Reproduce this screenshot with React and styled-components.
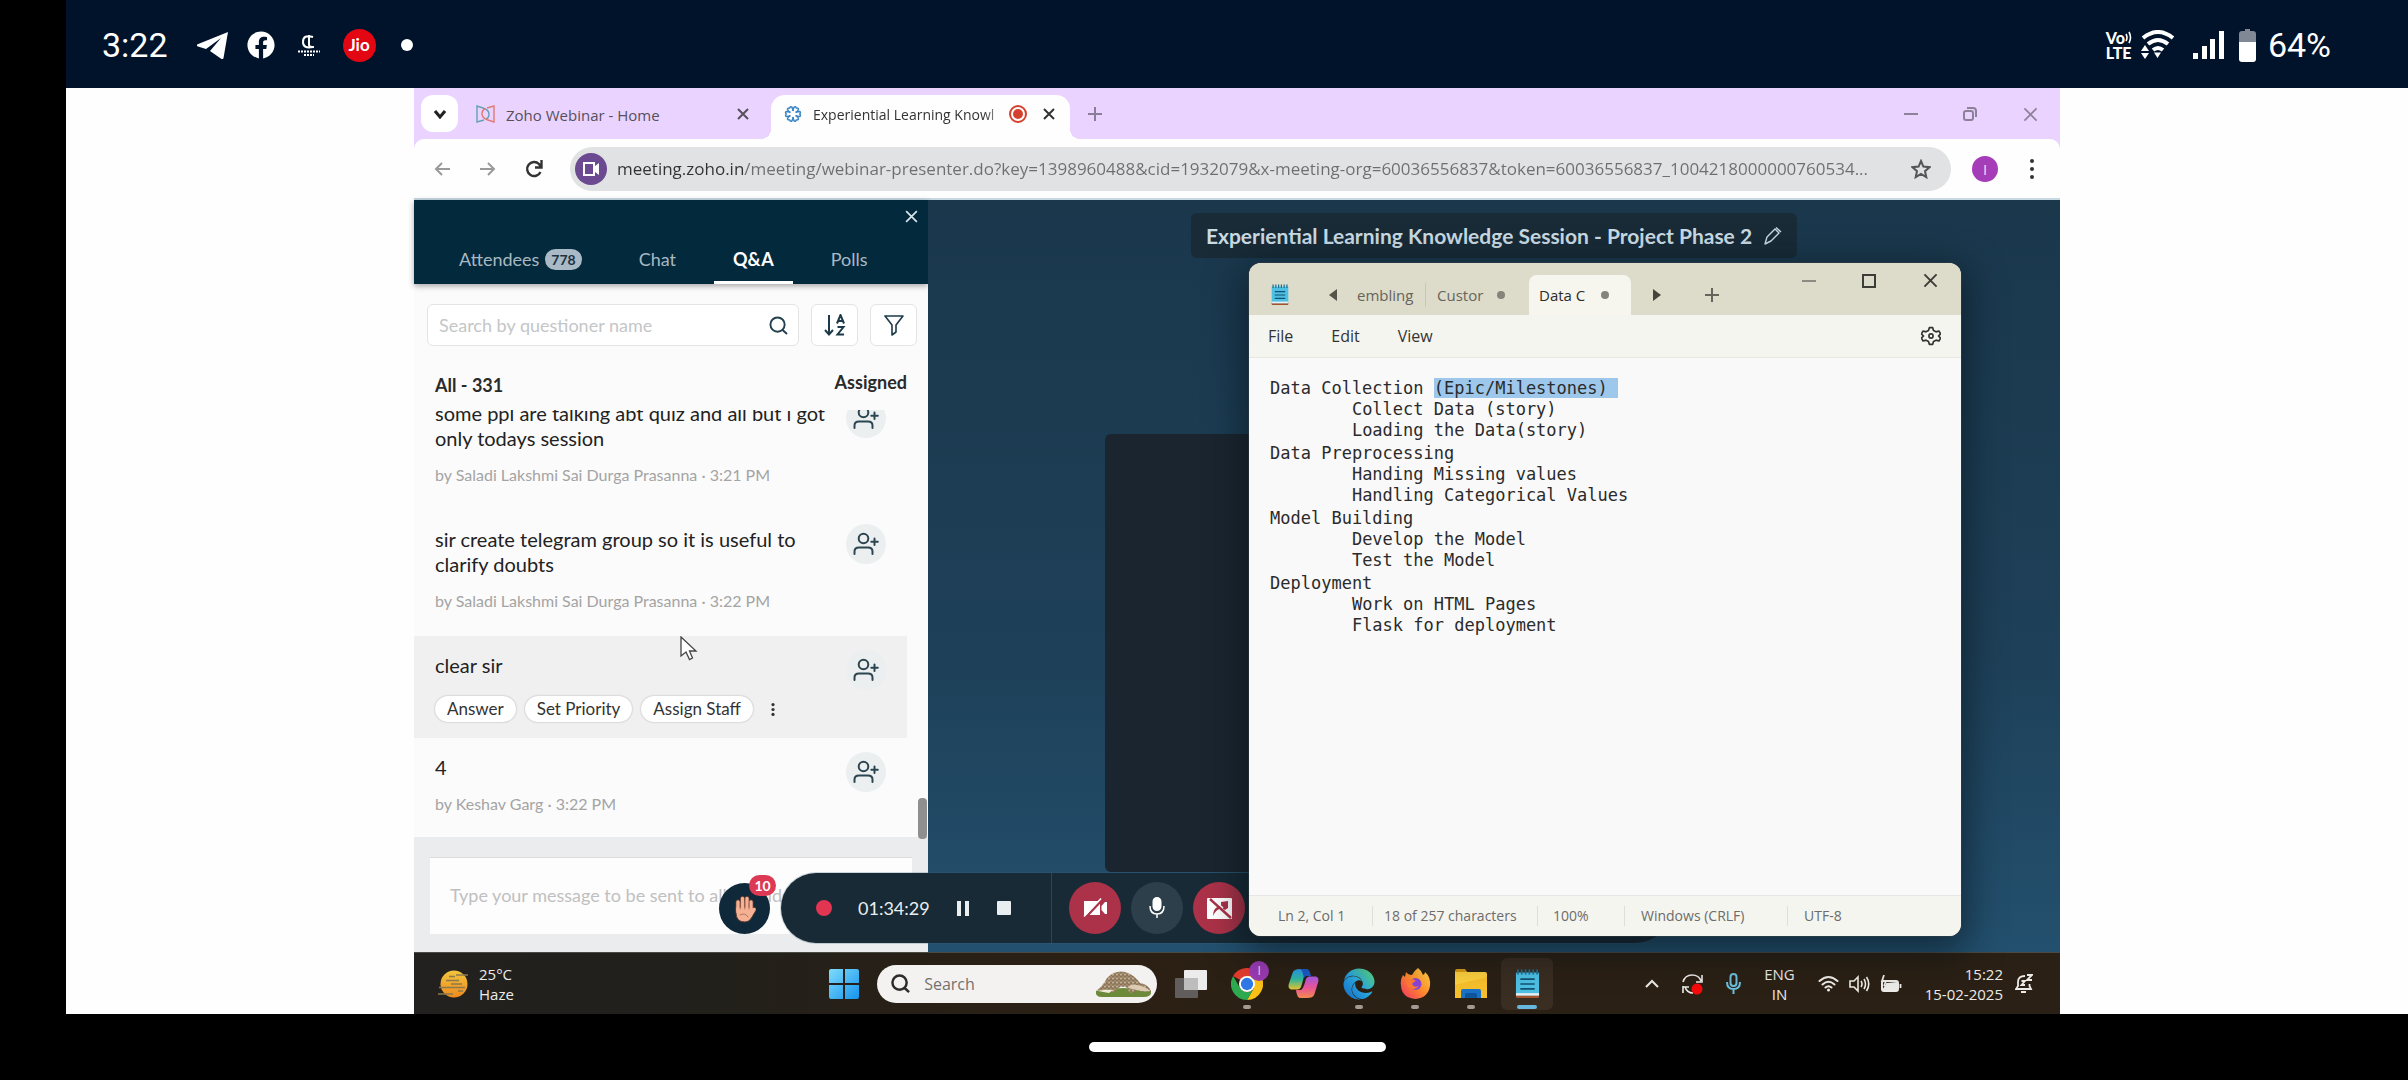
import React from "react";
import styled, { createGlobalStyle, css } from "styled-components";
import { FaFacebook, FaEdge } from "react-icons/fa";

const lato = `Lato, "Open Sans", sans-serif`;
const segoe = `"Open Sans", "Noto Sans", sans-serif`;

const Global = createGlobalStyle`
  * { box-sizing: border-box; }
  body { margin: 0; background: #000; font-family: ${lato}; }
  button, input, textarea { font: inherit; color: inherit; margin: 0; padding: 0; border: 0; background: none; outline: none; }
  ul { list-style: none; margin: 0; padding: 0; }
  h1, h2, p { margin: 0; font: inherit; }
  svg { display: block; flex: none; }
`;

/* ---------- phone shell ---------- */
const Phone = styled.div`
  height: 100vh;
  display: flex;
  flex-direction: column;
  padding-left: 66px;
  background: #000;
`;
const StatusBar = styled.header`
  height: 88px;
  flex: none;
  display: flex;
  align-items: center;
  justify-content: space-between;
  padding: 2px 77px 0 36px;
  background: #00132a;
  color: #fff;
  font: 400 34px/40px Roboto, sans-serif;
`;
const StatusGroup = styled.div`
  display: flex;
  align-items: center;
  gap: ${(p) => p.$gap}px;
`;
const Clock = styled.time`
  margin-right: 10px;
`;
const Jio = styled.span`
  width: 33px;
  height: 33px;
  border-radius: 50%;
  background: #e30613;
  display: grid;
  place-items: center;
  font: 700 17px/18px Lato, sans-serif;
`;
const MoreDot = styled.span`
  width: 12px;
  height: 12px;
  margin-left: 6px;
  border-radius: 50%;
  background: #fff;
`;
const VoLte = styled.span`
  display: flex;
  flex-direction: column;
  font: 900 16px/15px Lato, sans-serif;
`;
const VoRow = styled.span`
  display: flex;
  align-items: center;
`;
const Canvas = styled.main`
  flex: 1;
  min-height: 0;
  display: flex;
  padding: 0 348px;
  background: #fefefe;
`;
const HomeBar = styled.footer`
  height: 66px;
  flex: none;
  display: grid;
  place-items: center;
`;
const HomePill = styled.button`
  width: 297px;
  height: 10px;
  border-radius: 5px;
  background: #fff;
`;

/* ---------- shared screen ---------- */
const Share = styled.div`
  position: relative;
  flex: 1;
  min-width: 0;
  display: flex;
  flex-direction: column;
  background: #ead4ff;
`;
const TabStrip = styled.div`
  height: 51px;
  flex: none;
  display: flex;
  align-items: center;
  padding: 7px 21px 0 7px;
  color: #55505c;
  font: 400 15px/20px ${segoe};
`;
const TabMenu = styled.button`
  width: 37px;
  height: 37px;
  margin-bottom: 7px;
  border-radius: 12px;
  background: #fff;
  color: #222;
  display: grid;
  place-items: center;
`;
const ChromeTab = styled.div`
  position: relative;
  height: 44px;
  display: flex;
  align-items: center;
  padding-bottom: 6px;
  ${(p) =>
    p.$active
      ? css`
          width: 299px;
          padding-left: 13px;
          padding-right: 14px;
          background: #fffefe;
          border-radius: 14px 14px 0 0;
          color: #333;
          font-size: 14px;
          &::before, &::after {
            content: "";
            position: absolute;
            bottom: 0;
            width: 10px;
            height: 10px;
          }
          &::before { left: -10px; background: radial-gradient(circle at 0 0, transparent 10px, #fffefe 10px); }
          &::after { right: -10px; background: radial-gradient(circle at 100% 0, transparent 10px, #fffefe 10px); }
        `
      : css`
          width: 313px;
          padding-left: 18px;
          padding-right: 21px;
        `}
`;
const TabTitle = styled.button`
  flex: 1;
  min-width: 0;
  margin: 2px 2px 0 11px;
  white-space: nowrap;
  text-align: left;
  ${(p) => p.$fade && css`mask-image: linear-gradient(90deg, #000 88%, transparent 102%);`}
`;
const Plain = styled.button`
  display: grid;
  place-items: center;
  color: ${(p) => p.$color || "inherit"};
`;
const RecIcon = styled.span`
  margin-right: 15px;
`;
const NewTab = styled(Plain)`
  margin: 0 auto 6px 18px;
  color: #8b7d99;
`;
const WinControls = styled.div`
  display: flex;
  gap: 45px;
  margin-bottom: 6px;
  color: #8d8199;
`;
const Toolbar = styled.div`
  height: 61px;
  flex: none;
  display: flex;
  align-items: center;
  gap: 26px;
  padding: 0 25px 0 18px;
  background: #fffefe;
  border-bottom: 2px solid #c6d8e2;
  border-radius: 10px 10px 0 0;
`;
const Omnibox = styled.label`
  flex: 1;
  height: 44px;
  display: flex;
  align-items: center;
  gap: 10px;
  padding: 0 20px 0 5px;
  border-radius: 22px;
  background: #e1e2e3;
`;
const SiteBadge = styled.span`
  width: 32px;
  height: 32px;
  border-radius: 50%;
  background: #6b4a91;
  display: grid;
  place-items: center;
`;
const UrlInput = styled.input`
  flex: 1;
  min-width: 0;
  height: 30px;
  font: 400 17px/30px ${segoe};
  color: transparent;
  background: linear-gradient(90deg, #303234 127px, #6c6e70 127px);
  background-clip: text;
  -webkit-background-clip: text;
`;
const Avatar = styled.button`
  width: 26px;
  height: 26px;
  margin: 0 5px 0 -5px;
  border-radius: 50%;
  background: #a63db8;
  color: #f3dcf7;
  font: 400 15px/26px ${segoe};
`;

/* ---------- webinar ---------- */
const Webinar = styled.div`
  flex: 1;
  min-height: 0;
  display: flex;
`;
const Panel = styled.section`
  width: 514px;
  flex: none;
  display: flex;
  flex-direction: column;
  background: #fbfbfb;
  font-family: ${lato};
`;
const PanelHead = styled.div`
  height: 84px;
  flex: none;
  display: flex;
  flex-direction: column;
  justify-content: space-between;
  background: #03293d;
  box-shadow: 0 2px 6px rgba(0, 0, 0, 0.35);
`;
const PanelClose = styled.button`
  align-self: flex-end;
  margin: 9px 9px 0 0;
  color: #dbe4e9;
`;
const PanelTabs = styled.nav`
  display: flex;
  gap: 19px;
  padding-left: 26px;
`;
const PanelTab = styled.button`
  height: 50px;
  padding: 3px 19px 0;
  display: flex;
  align-items: center;
  gap: 6px;
  border-bottom: 3px solid ${(p) => (p.$active ? "#fff" : "transparent")};
  color: ${(p) => (p.$active ? "#fff" : "#a9b9c2")};
  font-size: 18px;
  font-weight: ${(p) => (p.$active ? 700 : 400)};
`;
const Count = styled.span`
  height: 21px;
  padding: 0 6px;
  border-radius: 11px;
  background: #a9bac6;
  color: #1d3341;
  font: 700 14px/21px ${lato};
`;
const Filters = styled.div`
  display: flex;
  gap: 12px;
  padding: 20px 11px 0 13px;
`;
const box = css`
  height: 42px;
  border: 1px solid #e4e4e4;
  border-radius: 6px;
  background: #fff;
`;
const SearchBox = styled.label`
  ${box}
  flex: 1;
  display: flex;
  align-items: center;
  padding: 0 10px 0 11px;
  color: #23404f;
`;
const SearchInput = styled.input`
  flex: 1;
  min-width: 0;
  font-size: 18px;
  &::placeholder { color: #c4c6c7; opacity: 1; }
`;
const FilterButton = styled.button`
  ${box}
  width: 47px;
  display: grid;
  place-items: center;
  color: #1c3a49;
`;
const ListHead = styled.div`
  display: flex;
  justify-content: space-between;
  align-items: center;
  height: 64px;
  flex: none;
  padding: 14px 21px 0;
  font: 700 18px/24px ${lato};
  color: #2a2a2a;
`;
const Assigned = styled.span`
  margin-bottom: 6px;
`;
const List = styled.ul`
  flex: 1;
  min-height: 0;
  overflow: hidden;
  display: flex;
  flex-direction: column;
  justify-content: flex-end;
`;
const Item = styled.li`
  flex: none;
  display: flex;
  justify-content: space-between;
  align-items: flex-start;
  margin-right: 21px;
  padding: 14px 21px ${(p) => p.$bottom}px 21px;
  background: ${(p) => (p.$active ? "#f0f0f0" : "transparent")};
`;
const ItemBody = styled.div`
  padding-top: 3px;
  flex: 1;
  margin-right: 4px;
`;
const Question = styled.p`
  font-size: 20px;
  line-height: 25px;
  color: #222;
`;
const Byline = styled.p`
  margin-top: 14px;
  font-size: 16px;
  line-height: 20px;
  color: #a4a4a4;
`;
const AssignButton = styled.button`
  width: 40px;
  height: 40px;
  border-radius: 50%;
  background: #ebeff0;
  color: #2c4550;
  display: grid;
  place-items: center;
`;
const Actions = styled.div`
  display: flex;
  align-items: center;
  gap: 9px;
  margin-top: 18px;
`;
const Pill = styled.button`
  height: 26px;
  padding: 0 12px;
  border-radius: 13px;
  background: #fff;
  box-shadow: 0 0 2px rgba(0, 0, 0, 0.3);
  font-size: 17px;
  line-height: 26px;
  color: #333;
  white-space: nowrap;
`;
const MoreButton = styled.button`
  margin-left: 8px;
  color: #333;
`;
const Composer = styled.div`
  height: 115px;
  flex: none;
  padding: 20px 16px 18px;
  background: #ebeced;
`;
const Message = styled.textarea`
  display: block;
  width: 100%;
  height: 77px;
  padding: 24px 20px;
  border-top: 1px solid #dcdcdc;
  background: #fdfdfd;
  resize: none;
  overflow: hidden;
  white-space: nowrap;
  font-size: 18px;
  line-height: 26px;
  &::placeholder { color: #c0c0c0; opacity: 1; }
`;
const ScrollThumb = styled.span`
  position: absolute;
  left: 504px;
  top: 710px;
  width: 9px;
  height: 41px;
  border-radius: 4px;
  background: #8f8f8f;
`;
const Stage = styled.section`
  flex: 1;
  min-width: 0;
  display: flex;
  flex-direction: column;
  align-items: center;
  padding-top: 13px;
  background: linear-gradient(180deg, #1a374c 0%, #1e4058 60%, #23506e 100%);
`;
const SessionTitle = styled.div`
  height: 45px;
  flex: none;
  display: flex;
  align-items: center;
  gap: 12px;
  padding: 0 15px;
  border-radius: 6px;
  background: #182b37;
  color: #c9dae3;
  font: 700 21px/28px ${lato};
  white-space: nowrap;
`;
const Video = styled.div`
  width: 778px;
  max-width: 90%;
  height: 438px;
  flex: none;
  margin-top: 176px;
  border-radius: 6px;
  background: #1b252f;
`;
const Controls = styled.div`
  position: absolute;
  left: 367px;
  top: 785px;
  width: 890px;
  height: 70px;
  display: flex;
  align-items: center;
  padding-left: 35px;
  border-radius: 35px;
  background: #172a35;
  box-shadow: 0 0 0 1px rgba(60, 100, 120, 0.25);
  color: #e9eef0;
`;
const RecDot = styled.span`
  width: 16px;
  height: 16px;
  border-radius: 50%;
  background: #e23552;
`;
const Timer = styled.time`
  width: 72px;
  margin: 0 26px;
  font: 400 18px/24px ${lato};
`;
const PlainGap = styled(Plain)`
  margin-right: 27px;
`;
const Divider = styled.span`
  align-self: stretch;
  width: 1px;
  margin: 0 17px 0 13px;
  background: #2e444f;
`;
const Round = styled.button`
  width: 52px;
  height: 52px;
  margin-right: 10px;
  border-radius: 50%;
  background: ${(p) => (p.$off ? "#ab3248" : "#2d3f4b")};
  color: #fff;
  display: grid;
  place-items: center;
`;
const HandButton = styled.button`
  position: absolute;
  left: 305px;
  top: 795px;
  width: 51px;
  height: 51px;
  border-radius: 50%;
  background: #10293a;
  display: grid;
  place-items: center;
`;
const HandCount = styled.span`
  position: absolute;
  left: 30px;
  top: -8px;
  width: 27px;
  height: 21px;
  border-radius: 11px;
  background: #dc3a54;
  color: #fff;
  font: 700 14px/21px ${lato};
`;
const Cursor = styled.svg`
  position: absolute;
  left: 266px;
  top: 548px;
`;

/* ---------- notepad ---------- */
const Notepad = styled.section`
  position: absolute;
  left: 835px;
  top: 175px;
  width: 712px;
  height: 673px;
  display: flex;
  flex-direction: column;
  border-radius: 12px;
  overflow: hidden;
  background: #f9f9f9;
  box-shadow: 0 0 0 1px rgba(60, 70, 70, 0.4), 0 10px 36px 6px rgba(5, 15, 22, 0.55);
  font-family: ${segoe};
`;
const NoteTabs = styled.div`
  height: 52px;
  flex: none;
  display: flex;
  align-items: flex-end;
  padding: 0 22px 0 22px;
  background: #dddbca;
  color: #66655b;
  font-size: 15px;
`;
const NoteCell = styled.div`
  height: 40px;
  width: ${(p) => p.$w}px;
  display: flex;
  align-items: center;
  justify-content: ${(p) => p.$justify || "center"};
`;
const NoteTab = styled.button`
  height: ${(p) => (p.$active ? 40 : 24)}px;
  margin-bottom: ${(p) => (p.$active ? 0 : 8)}px;
  width: ${(p) => p.$w}px;
  display: flex;
  align-items: center;
  justify-content: space-between;
  padding: 0 ${(p) => (p.$active ? 22 : 24)}px 0 ${(p) => (p.$active ? 10 : 11)}px;
  border-radius: ${(p) => (p.$active ? "8px 8px 0 0" : 0)};
  border-left: ${(p) => (p.$rule ? "1px solid #c9c7b6" : 0)};
  background: ${(p) => (p.$active ? "#f6f6ef" : "transparent")};
  color: ${(p) => (p.$active ? "#2c2c28" : "inherit")};
  line-height: 22px;
  white-space: nowrap;
`;
const Unsaved = styled.span`
  width: 8px;
  height: 8px;
  flex: none;
  border-radius: 50%;
  background: #85847b;
`;
const NoteControls = styled.div`
  display: flex;
  gap: 46px;
  margin: 0 0 26px auto;
  color: #3d3d38;
`;
const NoteMenu = styled.nav`
  height: 43px;
  flex: none;
  display: flex;
  align-items: center;
  padding: 0 20px 0 19px;
  border-bottom: 1px solid #e8e8e3;
  background: #f5f5ef;
  color: #333;
  font-size: 16px;
  line-height: 22px;
`;
const MenuItem = styled.button`
  margin-right: 38px;
`;
const Settings = styled(Plain)`
  margin-left: auto;
`;
const Editor = styled.div`
  flex: 1;
  display: flex;
  flex-direction: column;
  gap: 2px;
  padding: 20px 21px;
  color: #2b2b2b;
  font: 400 17px/21px "DejaVu Sans Mono", "Liberation Mono", monospace;
`;
const Block = styled.pre`
  margin: 0;
  font: inherit;
  tab-size: 8;
`;
const Selected = styled.mark`
  background: #9dc8eb;
  color: inherit;
`;
const NoteStatus = styled.div`
  height: 41px;
  flex: none;
  display: flex;
  align-items: center;
  border-top: 1px solid #e6e6e2;
  background: #f5f5f0;
  color: #6c6c6a;
  font-size: 14px;
  line-height: 20px;
`;
const StatusCell = styled.span`
  width: ${(p) => p.$w}px;
  padding-left: ${(p) => p.$pad}px;
  border-right: ${(p) => (p.$last ? 0 : "1px solid #dededa")};
`;

/* ---------- taskbar ---------- */
const Taskbar = styled.div`
  height: 62px;
  flex: none;
  display: flex;
  align-items: center;
  padding: 0 27px 0 24px;
  border-top: 1px solid #4a4a45;
  background: linear-gradient(90deg, #22211f 0%, #22201b 18%, #2c2014 40%, #2a2015 100%);
  color: #ecebe8;
  font: 400 15px/20px ${segoe};
`;
const Weather = styled.button`
  display: flex;
  align-items: center;
  gap: 10px;
  text-align: left;
`;
const Stack = styled.span`
  display: flex;
  flex-direction: column;
  text-align: ${(p) => p.$align || "left"};
`;
const Apps = styled.div`
  margin-left: auto;
  display: flex;
  align-items: center;
`;
const TaskSearch = styled.label`
  width: 280px;
  height: 38px;
  margin: 0 8px 0 18px;
  display: flex;
  align-items: center;
  gap: 14px;
  padding: 0 5px 0 14px;
  border-radius: 19px;
  background: #f3f2f0;
  color: #2c2c2c;
`;
const TaskInput = styled.input`
  flex: 1;
  min-width: 0;
  font-size: 16px;
  &::placeholder { color: #73716e; opacity: 1; }
`;
const Slots = styled.div`
  display: flex;
  gap: 4px;
`;
const AppSlot = styled.button`
  position: relative;
  width: 52px;
  height: 52px;
  border-radius: 6px;
  display: grid;
  place-items: center;
  background: ${(p) => (p.$current ? "#3a2d21" : "transparent")};
`;
const Running = styled.span`
  position: absolute;
  left: 50%;
  bottom: 1px;
  width: ${(p) => (p.$current ? 20 : 8)}px;
  height: 4px;
  border-radius: 2px;
  transform: translateX(-50%);
  background: ${(p) => (p.$current ? "#67b7e0" : "#a39b93")};
`;
const Tray = styled.div`
  margin-left: 92px;
  display: flex;
  align-items: center;
  gap: 23px;
`;
const TrayGroup = styled.div`
  display: flex;
  align-items: center;
  gap: ${(p) => p.$gap}px;
`;

/* ---------- icons ---------- */
const Svg = ({ w = 20, h, box, sw = 2, children, ...rest }) => (
  <svg width={w} height={h || w} viewBox={box || `0 0 ${w} ${h || w}`} fill="none" stroke="currentColor" strokeWidth={sw} aria-hidden="true" {...rest}>
    {children}
  </svg>
);
const Cross = ({ s = 14, sw = 2 }) => (
  <Svg w={s} box="0 0 14 14" sw={sw}><path d="M2 2L12 12M12 2L2 12" /></Svg>
);
const Minus = ({ sw = 2 }) => <Svg w={14} sw={sw}><path d="M0 7H14" /></Svg>;
const Dots = ({ h = 22, r = 2 }) => (
  <Svg w={6} h={h} stroke="none" fill="currentColor">
    <circle cx="3" cy={r + 1} r={r} /><circle cx="3" cy={h / 2} r={r} /><circle cx="3" cy={h - r - 1} r={r} />
  </Svg>
);
const Magnifier = ({ s = 20, sw = 2 }) => (
  <Svg w={s} box="0 0 20 20" sw={sw}><circle cx="9" cy="9" r="7.5" /><path d="M14 14.5L19 19" /></Svg>
);
const PersonPlus = () => (
  <Svg w={26} h={24} sw={2} strokeLinecap="round">
    <circle cx="10.500" cy="6.500" r="4.800" />
    <path d="M1.500 22V19.500C1.500 16.500 3.500 15.500 6 15.500H15C18 15.500 19.500 17 19.500 19.500V22" />
    <path d="M21.500 6.500V13M18.300 9.800H24.800" />
  </Svg>
);
const NotepadIcon = ({ w, h }) => (
  <Svg w={w} h={h} box="0 0 26 30" stroke="none">
    <rect x="1" y="26" width="24" height="3.500" rx="1" fill="#a3542d" />
    <rect x="1" y="3" width="24" height="24" rx="1" fill="#4ec0e4" />
    <rect x="1" y="24.500" width="24" height="2.500" fill="#e9eef0" />
    <path d="M3 0V5M7 0V5M11 0V5M15 0V5M19 0V5M23 0V5" stroke="#1c6f94" strokeWidth="1.800" />
    <path d="M5.500 10H20.500M5.500 15H20.500M5.500 20H20.500" stroke="#0f5272" strokeWidth="1.800" />
  </Svg>
);
const Chrome = () => (
  <Svg w={32} box="0 0 48 48" stroke="none">
    <path d="M24 24L3.200 12A24 24 0 0 1 44.800 12Z" fill="#e33b2e" />
    <path d="M24 12H44.800A24 24 0 0 1 24 48L34.400 30Z" fill="#fbc116" />
    <path d="M3.200 12L13.600 30A12 12 0 0 0 34.400 30L24 48A24 24 0 0 1 3.200 12Z" fill="#2da94f" />
    <circle cx="24" cy="24" r="12" fill="#fff" />
    <circle cx="24" cy="24" r="9.200" fill="#2f78e8" />
  </Svg>
);
const ChromeBadge = styled.span`
  position: absolute;
  right: 4px;
  top: 3px;
  width: 20px;
  height: 20px;
  border-radius: 50%;
  background: #9a3bb3;
  color: #f0d9f5;
  font: 400 12px/20px ${segoe};
`;
const Copilot = () => (
  <Svg w={31} h={29} stroke="none">
    <defs>
      <linearGradient id="cpA" x1="0" y1="0" x2="0" y2="1"><stop offset="0" stopColor="#2b9be8" /><stop offset=".5" stopColor="#2fb9a0" /><stop offset="1" stopColor="#e8c52f" /></linearGradient>
      <linearGradient id="cpB" x1="0" y1="0" x2="0" y2="1"><stop offset="0" stopColor="#a95ae8" /><stop offset=".5" stopColor="#e8559a" /><stop offset="1" stopColor="#f58a4f" /></linearGradient>
    </defs>
    <path d="M12 0H18L14.500 13L13 18C12 20 11 20.500 8 20.500H4C1 20.500 0 18 .8 15L4.500 4C5.500 1 8 0 12 0Z" fill="url(#cpA)" />
    <path d="M11 0H18C21 0 21.500 2 22.500 5L23 7H19C17.500 7 17 7.500 16 9C15 5 14.500 0 11 0Z" fill="#1d58c4" />
    <path d="M19 29H13C10 29 9.500 27 8.500 24L8 21H12C14 21 15 19 16.500 15L18 10C19 8 20 7.500 23 7.500H27C30 7.500 31 10 30.200 13L26.500 25C25.500 28 23 29 19 29Z" fill="url(#cpB)" />
  </Svg>
);
const Folder = () => (
  <Svg w={32} h={29} stroke="none">
    <path d="M0 2Q0 0 2 0H10L13 4H0Z" fill="#d79a16" />
    <path d="M0 3H30Q32 3 32 5V29H0Z" fill="#fccf3e" />
    <path d="M0 16L32 8V29H0Z" fill="#f6bf2c" />
    <path d="M6 29V22Q6 20 8 20H24Q26 20 26 22V29Z" fill="#1a72c4" />
    <path d="M10 29V26Q10 24 12 24H20Q22 24 22 26V29Z" fill="#0d559c" />
  </Svg>
);
const Hand = () => (
  <Svg w={22} h={28} strokeLinecap="round">
    <g stroke="#5b3a32" strokeWidth="5">
      <path d="M4 7V16M8.500 3.500V14M13 3.500V14M17 7V16M20 14.500L16 21" />
    </g>
    <path d="M2 12H18.500V17L20 15Q18 27 11 27Q2 27 2 18Z" fill="#f5b193" stroke="#5b3a32" strokeWidth="1" />
    <g stroke="#f5b193" strokeWidth="3.400">
      <path d="M4 7V17M8.500 3.500V17M13 3.500V17M17 7V17M20 14.500L16 21" />
    </g>
    <path d="M6.200 8V14M10.700 7V14M15 8V14M6 20Q11 17 14 22" stroke="#a7634f" strokeWidth=".8" />
  </Svg>
);
const Pangolin = () => (
  <Svg w={57} h={27} stroke="none">
    <defs>
      <pattern id="scales" width="4" height="4" patternUnits="userSpaceOnUse">
        <rect width="4" height="4" fill="#a18a6b" /><path d="M0 0Q2 5 4 0" fill="#c4b091" stroke="#63503b" strokeWidth=".7" />
      </pattern>
    </defs>
    <path d="M1 21Q28 15 56 21Q57 27 48 27H7Q0 27 1 21Z" fill="#6d8a3a" />
    <path d="M1 21Q8 16 12 8Q20 0 30 2Q40 5 45 13Q53 14 56 21Q48 23 42 20L38 23H34L33 18Q24 14 20 22H15L14 19Q8 20 1 21Z" fill="url(#scales)" />
    <path d="M33 18Q35 13 42 15Q50 16 55 21Q48 22 42 20Z" fill="#dccbb2" />
    <path d="M3 21Q11 19 18 20L14 23Z" fill="#f1ead9" />
  </Svg>
);
const WindowsLogo = () => (
  <Svg w={30} stroke="none">
    <defs><linearGradient id="win" x1="0" y1="0" x2="1" y2="1"><stop offset="0" stopColor="#7fdcfb" /><stop offset="1" stopColor="#1593ee" /></linearGradient></defs>
    <path d="M0 2Q0 0 2 0H14V14H0ZM16 0H28Q30 0 30 2V14H16ZM0 16H14V30H2Q0 30 0 28ZM16 16H30V28Q30 30 28 30H16Z" fill="url(#win)" />
  </Svg>
);
const Haze = () => (
  <Svg w={31} h={28}>
    <defs><linearGradient id="sun" x1="0" y1="0" x2="0" y2="1"><stop offset="0" stopColor="#f0c53c" /><stop offset="1" stopColor="#f08a1e" /></linearGradient></defs>
    <circle cx="16" cy="14" r="13.500" fill="url(#sun)" stroke="none" />
    <path d="M11 6.500H17M18 5H30M8 10.500H21M13 14H24M1 17.500H27M20 21H25M0 24H15" stroke="#8a7a4e" strokeWidth="1.500" />
  </Svg>
);
const WifiTray = () => (
  <Svg w={21} h={17} sw={2} strokeLinecap="round">
    <path d="M1.500 6Q10.500 -2 19.500 6M4.500 9.500Q10.500 4 16.500 9.500M7.500 12.500Q10.500 10 13.500 12.500" /><circle cx="10.500" cy="15" r="1.500" fill="currentColor" stroke="none" />
  </Svg>
);

const entries = [
  { text: "some ppl are talking abt quiz and all but i got only todays session", by: "by Saladi Lakshmi Sai Durga Prasanna · 3:21 PM", bottom: 25 },
  { text: "sir create telegram group so it is useful to clarify doubts", by: "by Saladi Lakshmi Sai Durga Prasanna · 3:22 PM", bottom: 25 },
  { text: "clear sir", active: true, bottom: 16 },
  { text: "4", by: "by Keshav Garg · 3:22 PM", bottom: 23 },
];

const notes = [
  ["Data Preprocessing", "Handing Missing values", "Handling Categorical Values"],
  ["Model Building", "Develop the Model", "Test the Model"],
  ["Deployment", "Work on HTML Pages", "Flask for deployment"],
];

function PhoneStatus() {
  return (
    <StatusBar>
      <StatusGroup $gap={19}>
        <Clock>3:22</Clock>
        <Svg w={31} h={27} stroke="none" fill="currentColor"><path d="M31 0L0 12.500Q-.5 14 1 14.500L9 17L24 6L13 19L24.500 27Q26 27.500 26.500 26Z" /></Svg>
        <FaFacebook size={28} />
        <Svg w={30} h={24} sw={2}>
          <path d="M19 4Q9 1 9 9Q9 16 19 14M15 2V12Q15 14 20 14" />
          <path d="M4 18.500H26M10 22H20" strokeWidth="2" strokeDasharray="2 1" />
        </Svg>
        <Jio>Jio</Jio>
        <MoreDot />
      </StatusGroup>
      <StatusGroup $gap={15}>
        <StatusGroup $gap={9}>
          <VoLte>
            <VoRow>Vo<Svg w={7} h={13} sw={1.6}><path d="M1 3Q3 6.500 1 10M4 1Q7 6.500 4 12" /></Svg></VoRow>
            <span>LTE</span>
          </VoLte>
          <Svg w={34} h={30} sw={4}>
            <path d="M2 8Q17 -4 32 8M7 14Q17 6 27 14M12 20Q17 16 22 20" />
            <path d="M13 22.500H20L16.500 28Z M0 21H8L4 15ZM0 23H8L4 29Z" fill="currentColor" stroke="none" />
          </Svg>
        </StatusGroup>
        <Svg w={34} h={28} stroke="none" fill="currentColor"><path d="M3 22H8V28H3ZM12 15H17V28H12ZM20 8H25V28H20ZM29 0H34V28H29Z" /></Svg>
        <StatusGroup $gap={12}>
          <Svg w={17} h={33} stroke="none">
            <path d="M6 0H11V2H14Q17 2 17 5V14H0V5Q0 2 3 2H6Z" fill="#7f8894" />
            <path d="M0 13H17V30Q17 33 14 33H3Q0 33 0 30Z" fill="#fff" />
          </Svg>
          <span>64%</span>
        </StatusGroup>
      </StatusGroup>
    </StatusBar>
  );
}

function Browser() {
  return (
    <>
      <TabStrip>
        <TabMenu aria-label="Search tabs"><Svg w={12} h={10} sw={3}><path d="M1 2L6 8L11 2" /></Svg></TabMenu>
        <ChromeTab>
          <Svg w={19} h={18} sw={1.4}>
            <path d="M8 15L1 17V1L7 3Q13 5 13 9Q13 13 10 14" stroke="#64a0b8" /><path d="M11 3L18 1V17L12 15Q6 13 6 9Q6 5 9 4" stroke="#e07a72" />
          </Svg>
          <TabTitle>Zoho Webinar - Home</TabTitle>
          <Plain aria-label="Close tab"><Cross s={14} sw={2} /></Plain>
        </ChromeTab>
        <ChromeTab $active>
          <Svg w={18} sw={1.5} stroke="#3d86c6">
            {[0, 60, 120, 180, 240, 300].map((a) => <path key={a} d="M7 6.500L6.500 2.500Q7 .8 9 2.200Q11 .8 11.500 2.500L11 6.500" transform={`rotate(${a + 30} 9 9)`} />)}
          </Svg>
          <TabTitle $fade>Experiential Learning Knowl</TabTitle>
          <RecIcon><Svg w={18} sw={2} stroke="#d5402f"><circle cx="9" cy="9" r="8" /><circle cx="9" cy="9" r="4" fill="#d5402f" /></Svg></RecIcon>
          <Plain aria-label="Close tab"><Cross s={14} sw={2} /></Plain>
        </ChromeTab>
        <NewTab aria-label="New tab"><Svg w={14}><path d="M7 0V14M0 7H14" /></Svg></NewTab>
        <WinControls>
          <Plain aria-label="Minimise"><Minus sw={2} /></Plain>
          <Plain aria-label="Restore"><Svg w={14} sw={2}><rect x="1" y="4" width="9" height="9" rx="2" /><path d="M4 1H10Q13 1 13 4V10" /></Svg></Plain>
          <Plain aria-label="Close"><Cross s={17} sw={1.4} /></Plain>
        </WinControls>
      </TabStrip>
      <Toolbar>
        <Plain $color="#9a9a9a" aria-label="Back"><Svg w={20}><path d="M18 10H4M10 4L4 10L10 16" /></Svg></Plain>
        <Plain $color="#9a9a9a" aria-label="Forward"><Svg w={20}><path d="M2 10H16M10 4L16 10L10 16" /></Svg></Plain>
        <Plain $color="#333" aria-label="Reload"><Svg w={20}><path d="M16.500 13A7 7 0 1 1 15 5L17 8M17.500 1V8.500H11" strokeWidth="2.400" /></Svg></Plain>
        <Omnibox>
          <SiteBadge><Svg w={18} h={16} stroke="#fff"><rect x="2" y="2" width="10" height="12" /><path d="M12 7L16 4V12L12 9" fill="#fff" /></Svg></SiteBadge>
          <UrlInput aria-label="Address" readOnly value="meeting.zoho.in/meeting/webinar-presenter.do?key=1398960488&cid=1932079&x-meeting-org=60036556837&token=60036556837_1004218000000760534..." />
          <Plain $color="#555" aria-label="Bookmark"><Svg w={20}><path d="M10 2L12.400 7.600L18.500 8.200L14 12.200L15.300 18.200L10 15L4.700 18.200L6 12.200L1.500 8.200L7.600 7.600Z" /></Svg></Plain>
        </Omnibox>
        <Avatar>I</Avatar>
        <Plain $color="#333" aria-label="Menu"><Dots h={22} /></Plain>
      </Toolbar>
    </>
  );
}

function QaPanel() {
  return (
    <Panel>
      <PanelHead>
        <PanelClose aria-label="Close panel"><Cross s={15} sw={1.6} /></PanelClose>
        <PanelTabs>
          <PanelTab>Attendees <Count>778</Count></PanelTab>
          <PanelTab>Chat</PanelTab>
          <PanelTab $active>Q&amp;A</PanelTab>
          <PanelTab>Polls</PanelTab>
        </PanelTabs>
      </PanelHead>
      <Filters>
        <SearchBox><SearchInput aria-label="Search" placeholder="Search by questioner name" /><Magnifier s={19} /></SearchBox>
        <FilterButton aria-label="Sort">
          <Svg w={22} sw={2}>
            <path d="M5 1V20M1 16L5 20.500L9 16" />
            <path d="M13 9.500L16.500 1L20 9.500M14.500 7H18.500M13.500 13H19.500L13.500 20.500H20" />
          </Svg>
        </FilterButton>
        <FilterButton aria-label="Filter"><Svg w={20} h={21} sw={1.6}><path d="M1 1H19L12 10V17L8 20V10Z" strokeLinejoin="round" /></Svg></FilterButton>
      </Filters>
      <ListHead><h2>All - 331</h2><Assigned>Assigned</Assigned></ListHead>
      <List>
        {entries.map((e) => (
          <Item key={e.text} $active={e.active} $bottom={e.bottom}>
            <ItemBody>
              <Question>{e.text}</Question>
              {e.by && <Byline>{e.by}</Byline>}
              {e.active && (
                <Actions>
                  <Pill>Answer</Pill><Pill>Set Priority</Pill><Pill>Assign Staff</Pill>
                  <MoreButton aria-label="More"><Dots h={15} r={1.6} /></MoreButton>
                </Actions>
              )}
            </ItemBody>
            <AssignButton aria-label="Assign"><PersonPlus /></AssignButton>
          </Item>
        ))}
      </List>
      <Composer><Message aria-label="Message" placeholder="Type your message to be sent to all attendees" /></Composer>
    </Panel>
  );
}

function MeetingControls() {
  return (
    <>
      <HandButton aria-label="Raised hands"><Hand /><HandCount>10</HandCount></HandButton>
      <Controls>
        <RecDot />
        <Timer>01:34:29</Timer>
        <PlainGap aria-label="Pause"><Svg w={14} h={15} sw={4}><path d="M3 0V15M11 0V15" /></Svg></PlainGap>
        <PlainGap aria-label="Stop"><Svg w={14} stroke="none" fill="currentColor"><rect width="14" height="14" rx="1" /></Svg></PlainGap>
        <Divider />
        <Round $off aria-label="Start video">
          <Svg w={25} h={20} stroke="none" fill="currentColor"><path d="M1 3H17V17H1ZM18.500 8L22 4H24V16H22L18.500 12Z" /><path d="M2 20L20 1" stroke="#ab3248" strokeWidth="2.500" /><path d="M1 18.500L18 .5" stroke="#fff" strokeWidth="1.500" /></Svg>
        </Round>
        <Round aria-label="Mute">
          <Svg w={16} h={22} sw={2}><rect x="4.500" y="1" width="7" height="12" rx="3.500" fill="currentColor" /><path d="M1 9Q1 17 8 17Q15 17 15 9M8 17V21" strokeWidth="1.500" /></Svg>
        </Round>
        <Round $off aria-label="Share screen">
          <Svg w={25} h={21} stroke="none"><rect width="25" height="21" rx="1" fill="#fff" /><path d="M6 18Q6 9 14 7.500V4L21 3V10L18 12L15 10Q9 11 6 18Z" fill="#ab3248" /><path d="M3 1L24 20" stroke="#ab3248" strokeWidth="2.500" /><path d="M6 1L16 10" stroke="#fff" strokeWidth="1.500" /></Svg>
        </Round>
      </Controls>
    </>
  );
}

function NotepadWindow() {
  return (
    <Notepad aria-label="Notepad">
      <NoteTabs>
        <NoteCell $w={49} $justify="flex-start"><NotepadIcon w={18} h={22} /></NoteCell>
        <NoteCell $w={26}><Svg w={8} h={12} stroke="none" fill="#55544a"><path d="M8 0V12L0 6Z" /></Svg></NoteCell>
        <NoteTab $w={79}>embling</NoteTab>
        <NoteTab $w={104} $rule>Custor <Unsaved /></NoteTab>
        <NoteTab $w={102} $active>Data C <Unsaved /></NoteTab>
        <NoteCell $w={52}><Svg w={8} h={12} stroke="none" fill="#44443c"><path d="M0 0V12L8 6Z" /></Svg></NoteCell>
        <NoteCell $w={58}><Svg w={14} sw={2}><path d="M7 0V14M0 7H14" /></Svg></NoteCell>
        <NoteControls>
          <Plain aria-label="Minimise"><Minus sw={1} /></Plain>
          <Plain aria-label="Maximise"><Svg w={14} sw={2}><rect x="1" y="1" width="12" height="12" /></Svg></Plain>
          <Plain aria-label="Close"><Cross s={17} sw={1.6} /></Plain>
        </NoteControls>
      </NoteTabs>
      <NoteMenu>
        <MenuItem>File</MenuItem><MenuItem>Edit</MenuItem><MenuItem>View</MenuItem>
        <Settings aria-label="Settings">
          <Svg w={20} box="0 0 24 24" sw={2} strokeLinejoin="round">
            <path d="M10 2H14L15 5.500L18 7L21.500 6L23.500 9.500L21 12L23.500 14.500L21.500 18L18 17L15 18.500L14 22H10L9 18.500L6 17L2.500 18L.5 14.500L3 12L.5 9.500L2.500 6L6 7L9 5.500Z" /><circle cx="12" cy="12" r="2.500" />
          </Svg>
        </Settings>
      </NoteMenu>
      <Editor>
        <Block>Data Collection <Selected>(Epic/Milestones) </Selected>{"\n\tCollect Data (story)\n\tLoading the Data(story)"}</Block>
        {notes.map((n) => <Block key={n[0]}>{n.join("\n\t")}</Block>)}
      </Editor>
      <NoteStatus>
        <StatusCell $w={124} $pad={29}>Ln 2, Col 1</StatusCell>
        <StatusCell $w={165} $pad={11}>18 of 257 characters</StatusCell>
        <StatusCell $w={87} $pad={15}>100%</StatusCell>
        <StatusCell $w={163} $pad={16}>Windows (CRLF)</StatusCell>
        <StatusCell $w={80} $pad={16} $last>UTF-8</StatusCell>
      </NoteStatus>
    </Notepad>
  );
}

function WindowsTaskbar() {
  return (
    <Taskbar>
      <Weather><Haze /><Stack><span>25°C</span><span>Haze</span></Stack></Weather>
      <Apps>
        <Plain aria-label="Start"><WindowsLogo /></Plain>
        <TaskSearch><Magnifier s={19} sw={2.6} /><TaskInput aria-label="Search" placeholder="Search" /><Pangolin /></TaskSearch>
        <Slots>
          <AppSlot aria-label="Task view"><Svg w={32} h={28} stroke="none"><rect x="9" width="23" height="20" rx="1" fill="#ececec" /><rect y="8" width="23" height="20" rx="1" fill="#77777a" opacity=".7" /><rect x="9" y="8" width="14" height="12" fill="#bdbdbd" /></Svg></AppSlot>
          <AppSlot aria-label="Chrome"><Chrome /><ChromeBadge>I</ChromeBadge><Running /></AppSlot>
          <AppSlot aria-label="Copilot"><Copilot /></AppSlot>
          <AppSlot aria-label="Edge">
            <svg width="0" height="0" style={{ position: "absolute" }} aria-hidden="true">
              <defs>
                <linearGradient id="edge" x1="0" y1="1" x2="1" y2="0"><stop offset="0" stopColor="#1268c4" /><stop offset=".5" stopColor="#2aa6e0" /><stop offset="1" stopColor="#5fdc6c" /></linearGradient>
                <linearGradient id="fox" x1="1" y1="0" x2="0" y2="1"><stop offset="0" stopColor="#ffe04a" /><stop offset=".5" stopColor="#ff8a2b" /><stop offset="1" stopColor="#f0306a" /></linearGradient>
              </defs>
            </svg>
            <FaEdge size={32} fill="url(#edge)" /><Running />
          </AppSlot>
          <AppSlot aria-label="Firefox">
            <Svg w={31} stroke="none">
              <path d="M18 0Q22 3 23 7Q25 6 25 4Q31 9 30 18Q28 30 15.500 31Q2 30 1 18Q0 12 3 7L5 9L6 4Q8 7 12 7Q15 2 18 0Z" fill="url(#fox)" />
              <circle cx="15.500" cy="16" r="6" fill="#8a45d8" />
              <path d="M6 13Q12 9 16 13Q13 14 12 16Q14 20 19 18Q15 23 10 20Q6 17 6 13Z" fill="#ff7a35" />
            </Svg>
            <Running />
          </AppSlot>
          <AppSlot aria-label="Explorer"><Folder /><Running /></AppSlot>
          <AppSlot $current aria-label="Notepad"><NotepadIcon w={25} h={30} /><Running $current /></AppSlot>
        </Slots>
      </Apps>
      <Tray>
        <Plain aria-label="Hidden icons"><Svg w={14} h={10}><path d="M1 8L7 2L13 8" /></Svg></Plain>
        <Svg w={21} h={22} sw={1.6}><path d="M1 9Q3 2 10 2Q17 2 19 8M20 2V9H14M1 13V20M1 14H7M3 14Q5 20 11 20" /><circle cx="15" cy="16" r="5.500" fill="#f50b0b" stroke="none" /></Svg>
        <Svg w={15} h={21} stroke="#6cc0de"><rect x="4.500" y="1" width="6" height="12" rx="3" /><path d="M1 9Q1 16 7.500 16Q14 16 14 9M7.500 16V21" /></Svg>
        <Stack $align="center"><span>ENG</span><span>IN</span></Stack>
        <TrayGroup $gap={10}>
          <WifiTray />
          <Svg w={21} h={18}><path d="M1 6H5L9 2V16L5 12H1ZM12 6Q14 9 12 12M15 4Q18 9 15 14M17.500 2Q22 9 17.500 16" strokeWidth="1.600" /></Svg>
          <Svg w={22} h={18}><rect x="2" y="6" width="16" height="10" rx="2" /><path d="M7 9L16 8V14H4Z" fill="currentColor" /><path d="M20.500 9V13M4 0L2 6H6L4 11" strokeWidth="1.800" /></Svg>
        </TrayGroup>
        <TrayGroup $gap={12}>
          <Stack $align="right"><span>15:22</span><span>15-02-2025</span></Stack>
          <Svg w={18} h={19} sw={1.8}><path d="M10 2Q3 2 3 8V12L1 15H16L14.500 12V10M6 18H11M12 1H17L12 6H17M6.500 7H10L6.500 11H10" /></Svg>
        </TrayGroup>
      </Tray>
    </Taskbar>
  );
}

export default function App() {
  return (
    <Phone>
      <Global />
      <PhoneStatus />
      <Canvas>
        <Share>
          <Browser />
          <Webinar>
            <QaPanel />
            <Stage>
              <SessionTitle>
                <h1>Experiential Learning Knowledge Session - Project Phase 2</h1>
                <Svg w={18} sw={1.4}><path d="M1 17L3 10L11 2L15 6L7 14ZM12 .5L17 5" strokeLinejoin="round" /></Svg>
              </SessionTitle>
              <Video />
            </Stage>
          </Webinar>
          <WindowsTaskbar />
          <ScrollThumb />
          <MeetingControls />
          <NotepadWindow />
          <Cursor width="18" height="26" viewBox="0 0 18 26" fill="#fff" stroke="#444" strokeWidth="1.300"><path d="M1 1V20L6 16L9.500 23.500L12.500 22L9.500 15H16Z" /></Cursor>
        </Share>
      </Canvas>
      <HomeBar><HomePill aria-label="Home" /></HomeBar>
    </Phone>
  );
}
